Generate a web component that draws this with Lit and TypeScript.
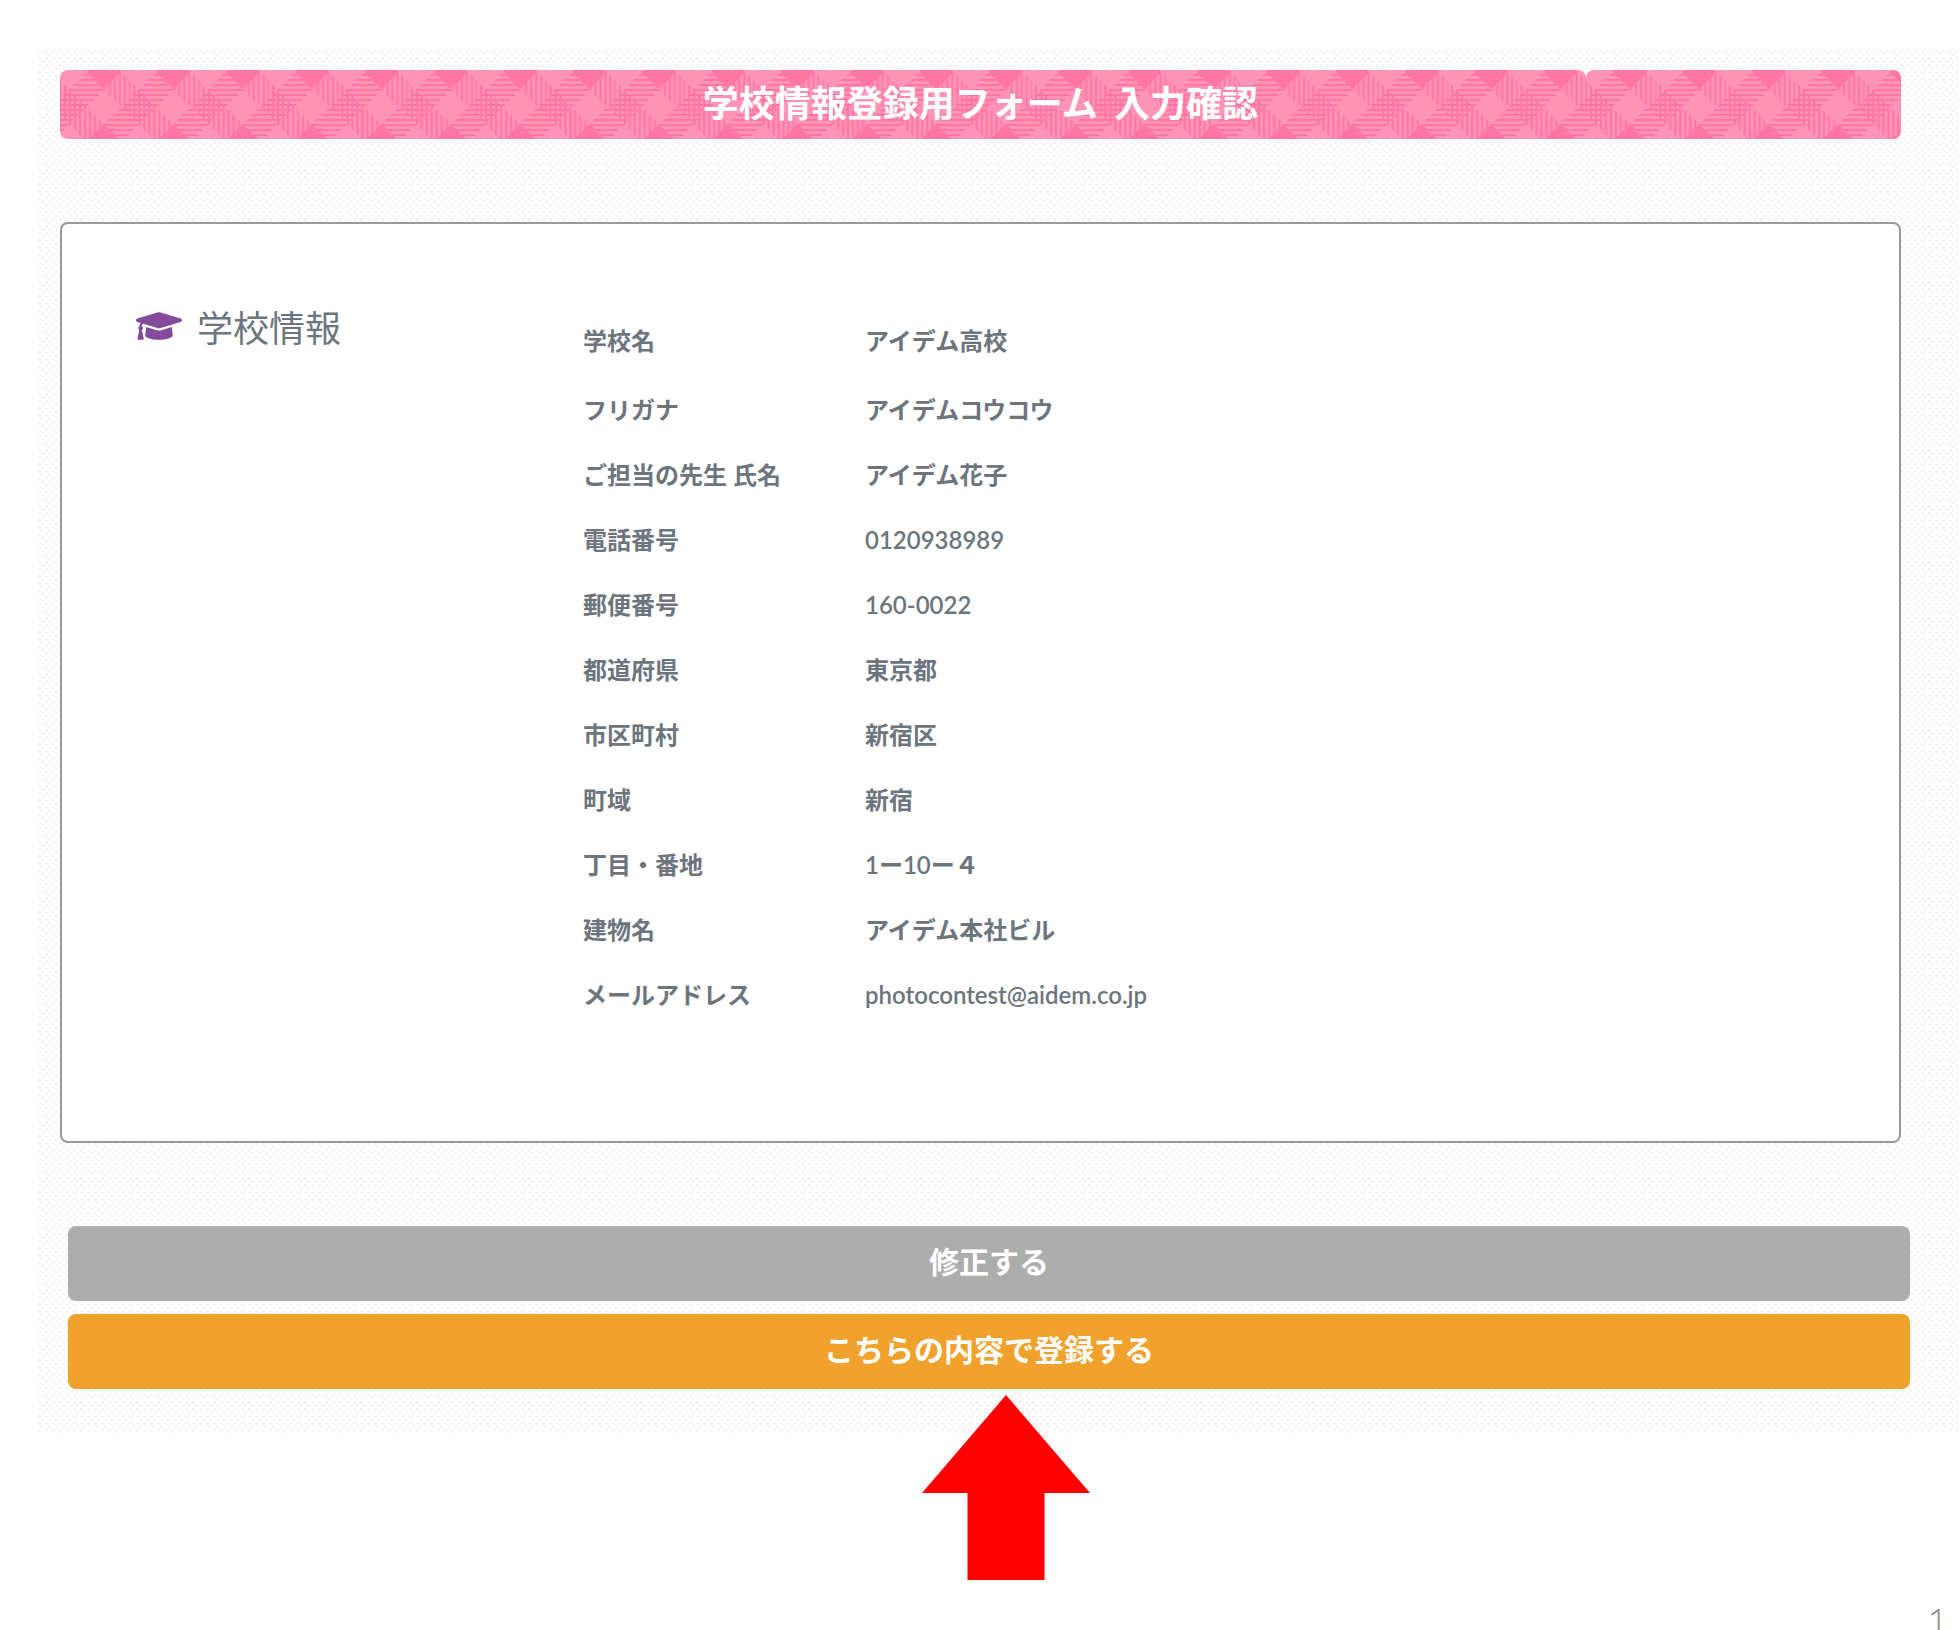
import { LitElement, html, css, svg } from "lit";
import { customElement } from "lit/decorators.js";

const ROWS: [string, string][] = [
  ["学校名", "アイデム高校"],
  ["フリガナ", "アイデムコウコウ"],
  ["ご担当の先生 氏名", "アイデム花子"],
  ["電話番号", "0120938989"],
  ["郵便番号", "160-0022"],
  ["都道府県", "東京都"],
  ["市区町村", "新宿区"],
  ["町域", "新宿"],
  ["丁目・番地", "1ー10ー４"],
  ["建物名", "アイデム本社ビル"],
  ["メールアドレス", "photocontest@aidem.co.jp"],
];

// Pink gingham strip: diamonds of solid, striped and cross-hatched cloth.
@customElement("gingham-strip")
class GinghamStrip extends LitElement {
  static styles = css`
    :host {
      display: block;
      overflow: hidden;
    }
    .cloth {
      display: block;
      width: 100%;
      height: 100%;
    }
  `;

  render() {
    const T = 69.36;
    const h = T / 4;
    const diamond = (cx: number, cy: number, fill: string) =>
      svg`<path d="M${cx} ${cy - h}L${cx + h} ${cy}L${cx} ${cy + h}L${cx - h} ${cy}Z" fill=${fill}></path>`;
    const across = (cx: number, cy: number) => diamond(cx, cy, "url(#across)");
    const down = (cx: number, cy: number) => diamond(cx, cy, "url(#down)");
    return html`<svg class="cloth" aria-hidden="true">
      <defs>
        <pattern id="across" width="70" height="5" y="4" patternUnits="userSpaceOnUse">
          <rect width="70" height="2" fill="#ff76a3"></rect>
        </pattern>
        <pattern id="down" width="5" height="70" x="4" patternUnits="userSpaceOnUse">
          <rect width="2" height="70" fill="#ff76a3"></rect>
        </pattern>
        <pattern id="cloth" width=${T} height="80" patternUnits="userSpaceOnUse">
          <rect width="70" height="80" fill="#ff94b7"></rect>
          ${diamond(44, 2, "#ff76a3")} ${diamond(44, 2 + T, "#ff76a3")}
          ${across(44 - h, 37 - h)} ${across(44 + h, 37 + h)}
          ${across(44 + h - T, 37 + h)} ${down(44 - h, 37 + h)}
          ${down(44 + h, 37 - h)} ${down(44 + h - T, 37 - h)}
          ${across(44 - 2 * h, 37)} ${down(44 - 2 * h, 37)}
          ${across(44 + 2 * h, 37)} ${down(44 + 2 * h, 37)}
        </pattern>
      </defs>
      <rect width="100%" height="100%" fill="url(#cloth)"></rect>
    </svg>`;
  }
}

@customElement("app-root")
class AppRoot extends LitElement {
  static styles = css`
    :host {
      display: flex;
      flex-direction: column;
      min-height: 100vh;
      box-sizing: border-box;
      padding: 48px 2px 0 36px;
      background: #fff;
      color: #6c757d;
      font-family: Lato, "Noto Sans CJK JP", sans-serif;
    }
    .panel {
      padding: 22px 48px 44px 24px;
      background-color: #fefefe;
      background-image: radial-gradient(circle, #ececec 0, #f5f5f5 1px, transparent 2px),
        radial-gradient(circle, #f1f1f1 0, #f7f7f7 1px, transparent 2px);
      background-size: 7px 7px, 7px 7px;
      background-position: 0 0, 3px 3px;
    }
    .banner {
      position: relative;
      display: flex;
      align-items: center;
      justify-content: center;
      height: 69px;
      margin: 0 9px 83px 0;
      border-radius: 8px;
      overflow: hidden;
      color: #fff;
      font-family: "Noto Sans CJK JP", sans-serif;
      font-size: 36px;
      font-weight: 700;
      line-height: 48px;
    }
    .cloths {
      position: absolute;
      inset: 0;
      display: flex;
    }
    .long {
      flex: 1526;
      border-top-right-radius: 8px;
    }
    .short {
      flex: 315;
      border-top-left-radius: 8px;
    }
    .title {
      position: relative;
      padding-bottom: 8px;
      white-space: pre;
    }
    .card {
      display: grid;
      grid-template-columns: 447fr 1242fr;
      margin: 0 9px 83px 0;
      padding: 84px 74px 114px;
      border: 2px solid #999;
      border-radius: 8px;
      background: #fff;
    }
    .heading {
      display: flex;
      align-items: center;
      align-self: start;
      gap: 15px;
      margin: 0;
      font-family: "Noto Sans CJK JP", sans-serif;
      font-size: 36px;
      font-weight: 400;
      line-height: 36px;
    }
    .cap {
      width: 46px;
      height: 28px;
      fill: #844a9c;
    }
    .rows {
      margin: 0;
      font-size: 24px;
      font-weight: 600;
      line-height: 65px;
    }
    .row {
      display: grid;
      grid-template-columns: 282fr 960fr;
    }
    .row:first-child {
      margin-bottom: 4px;
    }
    .label,
    .value {
      margin: 0;
    }
    .actions {
      position: relative;
      display: flex;
      flex-direction: column;
      gap: 13px;
      margin-left: 8px;
    }
    .button {
      height: 75px;
      padding: 0 0 8px;
      border: 0;
      border-radius: 8px;
      color: #fff;
      font-family: "Noto Sans CJK JP", sans-serif;
      font-size: 30px;
      font-weight: 700;
      line-height: 44px;
    }
    .back {
      background: #adadad;
    }
    .submit {
      background: #f1a22c;
    }
    .arrow {
      position: absolute;
      top: calc(100% + 6px);
      left: calc(50% - 67px);
      width: 168px;
      height: 185px;
      fill: #f00;
    }
    .footer {
      margin-top: auto;
      height: 28px;
      padding-right: 10px;
      overflow: clip;
      color: #8c8c8c;
      font-family: "Open Sans", sans-serif;
      font-size: 36px;
      font-weight: 300;
      line-height: 40px;
      text-align: right;
    }
  `;

  render() {
    return html`
      <main class="panel">
        <h1 class="banner">
          <span class="cloths">
            <gingham-strip class="long"></gingham-strip>
            <gingham-strip class="short"></gingham-strip>
          </span>
          <span class="title">学校情報登録用フォーム&nbsp;&nbsp;入力確認</span>
        </h1>
        <section class="card">
          <h2 class="heading">
            <svg class="cap" viewBox="0 64 640 384" aria-hidden="true">
              <path d="M622.34 153.2L343.4 67.5c-15.2-4.67-31.6-4.67-46.79 0L17.66 153.2c-23.54 7.23-23.54 38.36 0 45.59l48.63 14.94c-10.67 13.19-17.23 29.28-17.88 46.9C38.78 266.15 32 276.11 32 288c0 10.78 5.68 19.85 13.86 25.65L20.33 428.53C18.11 438.52 25.71 448 35.94 448h56.11c10.24 0 17.84-9.48 15.62-19.47L82.14 313.65C90.32 307.85 96 298.78 96 288c0-11.57-6.47-21.25-15.66-26.87.76-15.02 8.44-28.3 20.69-36.72L296.6 284.5c9.06 2.78 26.44 6.25 46.79 0l278.95-85.7c23.55-7.24 23.55-38.36 0-45.6zM352.79 315.09c-28.53 8.76-52.84 3.92-65.59 0l-145.02-44.55L128 384c0 35.35 85.96 64 192 64s192-28.65 192-64l-14.18-113.47-145.03 44.56z"></path>
            </svg>
            学校情報
          </h2>
          <dl class="rows">
            ${ROWS.map(
              ([label, value]) => html`<div class="row">
                <dt class="label">${label}</dt>
                <dd class="value">${value}</dd>
              </div>`
            )}
          </dl>
        </section>
        <div class="actions">
          <button class="button back" type="button">修正する</button>
          <button class="button submit" type="submit">こちらの内容で登録する</button>
          <svg class="arrow" viewBox="0 0 168 185" aria-hidden="true">
            <path d="M84 0L168 98H122.5V185H45.5V98H0Z"></path>
          </svg>
        </div>
      </main>
      <footer class="footer">1</footer>
    `;
  }
}
